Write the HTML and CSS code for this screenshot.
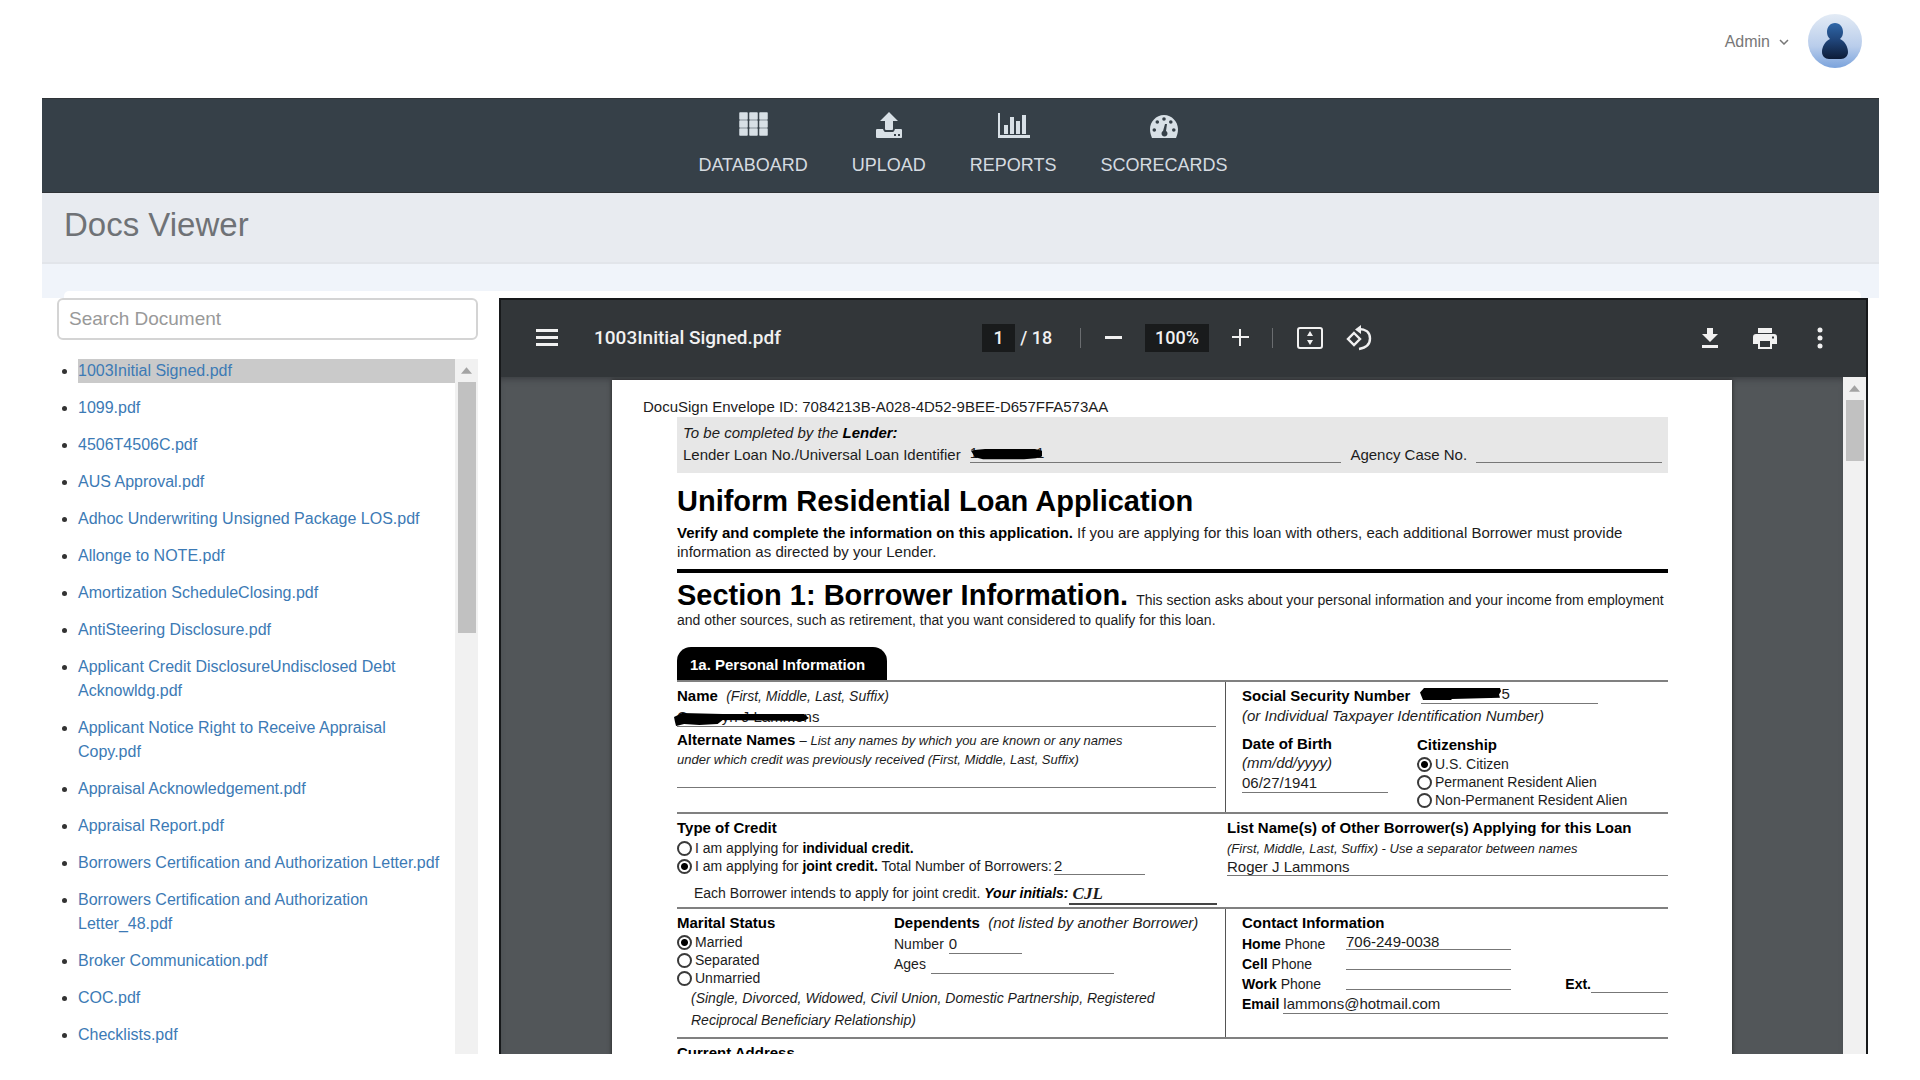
FILE: index.html
```html
<!DOCTYPE html>
<html lang="en">
<head>
<meta charset="utf-8">
<title>Docs Viewer</title>
<link rel="stylesheet" href="styles.css">
</head>
<body>
<div class="shell">
  <header class="header">
    <button class="account" type="button">Admin
      <svg class="chevron" viewBox="0 0 10 6"><path d="M1 1l4 4 4-4" fill="none" stroke="#777" stroke-width="1.5"/></svg>
    </button>
    <svg class="avatar" viewBox="0 0 54 54" role="img" aria-label="Admin profile">
      <defs>
        <linearGradient id="disc" x1="0" y1="0" x2="0" y2="1"><stop offset="0" stop-color="#e3ebf5"/><stop offset=".6" stop-color="#b9cdeb"/><stop offset="1" stop-color="#7ba3dc"/></linearGradient>
        <linearGradient id="person" x1="0" y1="0" x2="0" y2="1"><stop offset="0" stop-color="#2f67a8"/><stop offset=".5" stop-color="#1f4377"/><stop offset="1" stop-color="#0d1c38"/></linearGradient>
      </defs>
      <circle cx="27" cy="27" r="27" fill="url(#disc)"/>
      <path fill="url(#person)" d="M27 9c5 0 8 4 8 9 0 3-1 5-3 7 5 2 8 8 8 13 0 4-3 7-7 7H21c-4 0-7-3-7-7 0-5 3-11 8-13-2-2-3-4-3-7 0-5 3-9 8-9z"/>
    </svg>
  </header>

  <nav class="nav">
    <a href="#databoard"><svg viewBox="0 0 32 28"><path d="M3 1h7v6H3zM13 1h7v6h-7zM23 1h7v6h-7zM3 9h7v6H3zM13 9h7v6h-7zM23 9h7v6h-7zM3 17h7v6H3zM13 17h7v6h-7zM23 17h7v6h-7z" stroke="#d8e0e6" stroke-width="1.500" stroke-linejoin="round"/></svg>DATABOARD</a>
    <a href="#upload"><svg viewBox="0 0 32 28"><path fill-rule="evenodd" d="M16 0l9 9h-5v8c0 1-1 1-1 1h-6c-1 0-1-1-1-1V9H7zM4 17h6c1 3 2 3 3 3h6c1 0 2 0 3-3h6c1 0 1 1 1 1v7c0 1-1 1-1 1H4c-1 0-1-1-1-1v-7c0-1 1-1 1-1zm17 5v2h2v-2zm4 0v2h2v-2z"/></svg>UPLOAD</a>
    <a href="#reports"><svg viewBox="0 0 32 28"><path d="M1 1h2v22h30v3H1zM7 13h4v9H7zM13 5h4v17h-4zM19 9h4v13h-4zM25 3h4v19h-4z"/></svg>REPORTS</a>
    <a href="#scorecards"><svg viewBox="0 0 32 28"><path fill-rule="evenodd" d="M16 3c8 0 14 7 14 14 0 4-1 6-2 9H4c-1-3-2-5-2-9C2 10 8 3 16 3zM14.200 7a1.800 1.800 0 1 0 3.600 0a1.800 1.800 0 1 0-3.600 0zM7.500 10a1.800 1.800 0 1 0 3.600 0a1.800 1.800 0 1 0-3.600 0zM21 10a1.800 1.800 0 1 0 3.600 0a1.800 1.800 0 1 0-3.600 0zM4.500 18a1.800 1.800 0 1 0 3.600 0a1.800 1.800 0 1 0-3.600 0zM24 18a1.800 1.800 0 1 0 3.600 0a1.800 1.800 0 1 0-3.600 0zM17 12l-2 7a3 3 0 1 0 3 0l1-7z"/></svg>SCORECARDS</a>
  </nav>

  <div class="titlebar"><h1>Docs Viewer</h1></div>
  <div class="strip"><div class="strip-edge"></div></div>

  <main class="workspace">
    <aside class="sidebar">
      <input class="search" type="search" placeholder="Search Document" aria-label="Search Document">
      <div class="list-box">
        <ul class="docs">
          <li><a class="current" href="#d1">1003Initial Signed.pdf</a></li>
          <li><a href="#d2">1099.pdf</a></li>
          <li><a href="#d3">4506T4506C.pdf</a></li>
          <li><a href="#d4">AUS Approval.pdf</a></li>
          <li><a href="#d5">Adhoc Underwriting Unsigned Package LOS.pdf</a></li>
          <li><a href="#d6">Allonge to NOTE.pdf</a></li>
          <li><a href="#d7">Amortization ScheduleClosing.pdf</a></li>
          <li><a href="#d8">AntiSteering Disclosure.pdf</a></li>
          <li><a href="#d9">Applicant Credit DisclosureUndisclosed Debt Acknowldg.pdf</a></li>
          <li><a href="#d10">Applicant Notice Right to Receive Appraisal Copy.pdf</a></li>
          <li><a href="#d11">Appraisal Acknowledgement.pdf</a></li>
          <li><a href="#d12">Appraisal Report.pdf</a></li>
          <li><a href="#d13">Borrowers Certification and Authorization Letter.pdf</a></li>
          <li><a href="#d14">Borrowers Certification and Authorization Letter_48.pdf</a></li>
          <li><a href="#d15">Broker Communication.pdf</a></li>
          <li><a href="#d16">COC.pdf</a></li>
          <li><a href="#d17">Checklists.pdf</a></li>
        </ul>
        <div class="track"><svg viewBox="0 0 12 7"><path d="M6 0l6 7H0z" fill="#a3a3a3"/></svg><div class="thumb thumb-list"></div></div>
      </div>
    </aside>

    <section class="viewer">
      <div class="toolbar">
        <div class="tools">
          <button type="button" aria-label="Menu"><svg class="icon" viewBox="0 0 24 24"><path d="M1 3h22v3H1zM1 10h22v3H1zM1 17h22v3H1z"/></svg></button>
          <span class="filename">1003Initial Signed.pdf</span>
        </div>
        <div class="tools tools-mid">
          <input class="field page-no" type="text" value="1" aria-label="Page number">
          <span class="total">/ 18</span>
          <span class="sep"></span>
          <button type="button" aria-label="Zoom out"><svg class="icon-sm" viewBox="0 0 17 17"><path d="M0 7h17v3H0z"/></svg></button>
          <input class="field zoom" type="text" value="100%" aria-label="Zoom level">
          <button type="button" aria-label="Zoom in"><svg class="icon-sm" viewBox="0 0 17 17"><path d="M7 0h2v7h8v2H9v8H7V9H0V7h7z"/></svg></button>
          <span class="sep"></span>
          <button type="button" aria-label="Fit to page"><svg class="icon-lg" viewBox="0 0 26 26"><path d="M3 3h20q2 0 2 2v16q0 2-2 2H3q-2 0-2-2V5q0-2 2-2z" fill="none" stroke="#f1f1f1" stroke-width="2"/><path d="M13 6l3 5h-6zM13 20l3-5h-6z"/></svg></button>
          <button type="button" aria-label="Rotate"><svg class="icon-lg" viewBox="0 0 26 26"><path d="M8 8l6 6-6 6-6-6zM13 4c6 0 11 3 11 9.500S19 23 13 24" fill="none" stroke="#f1f1f1" stroke-width="2.400"/><path d="M15 0v9l-6-4.500z"/></svg></button>
        </div>
        <div class="tools tools-end">
          <button type="button" aria-label="Download"><svg class="icon" viewBox="0 0 24 24"><path d="M9 2h6v6h5l-8 8-8-8h5zM4 19h16v3H4z"/></svg></button>
          <button type="button" aria-label="Print"><svg class="icon" viewBox="0 0 24 24"><path fill-rule="evenodd" d="M5 2h14v5H5zM3 8h18q3 0 3 3v7h-5v5H5v-5H0v-7q0-3 3-3zm4 7v6h10v-6zM19 10.500v2h2v-2z"/></svg></button>
          <button type="button" aria-label="More"><svg class="icon" viewBox="0 0 24 24"><circle cx="12" cy="4" r="2.500"/><circle cx="12" cy="12" r="2.500"/><circle cx="12" cy="20" r="2.500"/></svg></button>
        </div>
      </div>

      <div class="canvas">
        <div class="desk">
          <article class="page">
            <p class="envelope">DocuSign Envelope ID: 7084213B-A028-4D52-9BEE-D657FFA573AA</p>
            <div class="form">
              <div class="lender">
                <p><i>To be completed by the <b>Lender:</b></i></p>
                <div class="line-row">
                  <span>Lender Loan No./Universal Loan Identifier</span>
                  <span class="blank blank-wide"><span class="redacted">1<span class="covered-loan"></span>1<svg class="ink ink-loan" viewBox="0 0 72 14" preserveAspectRatio="none"><path d="M0 3l6-1 8-1h50l7 2v6l-6 2-12 1H12L4 10z"/></svg></span></span>
                  <span>Agency Case No.</span>
                  <span class="blank blank-case"></span>
                </div>
              </div>

              <h2 class="form-title">Uniform Residential Loan Application</h2>
              <p class="verify"><b>Verify and complete the information on this application.</b> If you are applying for this loan with others, each additional Borrower must provide information as directed by your Lender.</p>

              <div class="section-head"><h2>Section 1: Borrower Information.</h2><span>This section asks about your personal information and your income from employment</span></div>
              <p class="section-note">and other sources, such as retirement, that you want considered to qualify for this loan.</p>

              <h3 class="tab">1a. Personal Information</h3>

              <div class="band band-a">
                <div class="left">
                  <p class="lh22"><b>Name</b>&nbsp; <i class="mid">(First, Middle, Last, Suffix)</i></p>
                  <div class="value name-value"><span class="redacted">C<span class="covered"></span>yn J Lammons<svg class="ink ink-name" viewBox="0 0 136 16" preserveAspectRatio="none"><path d="M0 6l8-4 40 1 80 0 5 4-5 3-80-1-5 4-18 1-15-1-8 2-1-4z"/></svg></span></div>
                  <p class="alt"><b>Alternate Names</b> <i class="small">– List any names by which you are known or any names</i></p>
                  <p class="lh18"><i class="small">under which credit was previously received (First, Middle, Last, Suffix)</i></p>
                  <div class="blank-line"></div>
                </div>
                <div class="right">
                  <div class="line-row"><b>Social Security Number</b><span class="blank blank-ssn"><span class="redacted"><span class="covered-ssn"></span>5<svg class="ink ink-ssn" viewBox="0 0 82 12" preserveAspectRatio="none"><path d="M0 5l4-4 76 0 1 3-2 3 1 3-48 1-1 1-28 0z"/></svg></span></span></div>
                  <p class="lh18"><i>(or Individual Taxpayer Identification Number)</i></p>
                  <div class="birth">
                    <div class="dob">
                      <p class="lh18"><b>Date of Birth</b></p>
                      <p class="lh19"><i>(mm/dd/yyyy)</i></p>
                      <div class="value dob-value">06/27/1941</div>
                    </div>
                    <fieldset class="citizen">
                      <legend><b>Citizenship</b></legend>
                      <label class="radio"><input type="radio" name="cit" checked>U.S. Citizen</label>
                      <label class="radio"><input type="radio" name="cit">Permanent Resident Alien</label>
                      <label class="radio"><input type="radio" name="cit">Non-Permanent Resident Alien</label>
                    </fieldset>
                  </div>
                </div>
              </div>

              <div class="band band-b">
                <div class="left">
                  <p class="lh22"><b>Type of Credit</b></p>
                  <label class="radio"><input type="radio" name="credit"><span>I am applying for <b>individual credit.</b></span></label>
                  <div class="joint"><label class="radio"><input type="radio" name="credit" checked><span>I am applying for <b>joint credit.</b> Total Number of Borrowers:</span></label><span class="value total-value">2</span></div>
                  <div class="initials"><span>Each Borrower intends to apply for joint credit. <b><i>Your initials:</i></b></span><span class="signature">CJL</span></div>
                </div>
                <div class="right">
                  <p class="lh22"><b>List Name(s) of Other Borrower(s) Applying for this Loan</b></p>
                  <p class="lh18"><i class="small">(First, Middle, Last, Suffix) - Use a separator between names</i></p>
                  <div class="value other-value">Roger J Lammons</div>
                </div>
              </div>

              <div class="band band-c">
                <div class="left">
                  <div class="status-row">
                    <fieldset class="marital">
                      <legend><b>Marital Status</b></legend>
                      <label class="radio"><input type="radio" name="marital" checked>Married</label>
                      <label class="radio"><input type="radio" name="marital">Separated</label>
                      <label class="radio"><input type="radio" name="marital">Unmarried</label>
                    </fieldset>
                    <div class="dependents">
                      <p class="lh22"><b>Dependents</b>&nbsp; <i>(not listed by another Borrower)</i></p>
                      <div class="dep-row"><span>Number</span><span class="value number-value">0</span></div>
                      <div class="dep-row"><span>Ages</span><span class="value ages-value"></span></div>
                    </div>
                  </div>
                  <p class="partner"><i>(Single, Divorced, Widowed, Civil Union, Domestic Partnership, Registered<br>Reciprocal Beneficiary Relationship)</i></p>
                </div>
                <div class="right">
                  <p class="lh22"><b>Contact Information</b></p>
                  <div class="contact"><span><b>Home</b> Phone</span><span class="value phone">706-249-0038</span></div>
                  <div class="contact"><span><b>Cell</b> Phone</span><span class="value phone"></span></div>
                  <div class="contact"><span><b>Work</b> Phone</span><span class="value phone"></span><b class="ext">Ext.</b><span class="value ext-value"></span></div>
                  <div class="email"><b>Email</b><span class="value email-value">lammons@hotmail.com</span></div>
                </div>
              </div>

              <div class="band band-d"><p class="lh22"><b>Current Address</b></p></div>
            </div>
          </article>
        </div>
        <div class="track"><svg viewBox="0 0 12 7"><path d="M6 0l6 7H0z" fill="#a3a3a3"/></svg><div class="thumb thumb-page"></div></div>
      </div>
    </section>
  </main>
</div>
</body>
</html>
```
FILE: styles.css
```css
* { box-sizing: border-box; }
body, h1, h2, h3, p, ul, fieldset { margin: 0; padding: 0; }
body { background: #fff; font-family: "Liberation Sans", Arial, sans-serif; overflow: hidden; }
button { border: 0; padding: 0; background: none; font: inherit; color: inherit; cursor: pointer; }
fieldset { border: 0; min-width: 0; }
legend { padding: 0; }
a { text-decoration: none; }

.shell { display: flex; flex-direction: column; height: 100vh; padding: 0 41px 26px 42px; }

/* header */
.header { display: flex; justify-content: flex-end; flex: none; height: 98px; padding: 14px 17px 0 0; gap: 19px; }
.account { display: flex; align-items: center; gap: 9px; height: 55px; font-size: 16px; color: #777; }
.chevron { width: 10px; height: 6px; }
.avatar { width: 54px; height: 54px; }

.nav { display: flex; justify-content: center; gap: 44px; flex: none; height: 95px; padding: 13px 0 0 5px; background: #364048; border-top: 1px solid #2f3337; border-bottom: 1px solid #2f3337; }
.nav a { display: flex; flex-direction: column; align-items: center; gap: 13px; font-size: 18px; line-height: 24px; color: #d5dbe0; }
.nav svg { width: 32px; height: 28px; fill: #d8e0e6; overflow: visible; }

.titlebar { flex: none; height: 71px; padding: 1px 22px; background: #e8ebf0; border-bottom: 2px solid #e2e5ea; }
.titlebar h1 { font-size: 33px; font-weight: 400; line-height: 62px; color: #6f7276; }
.strip { flex: none; height: 34px; padding: 27px 18px 0 22px; background: #f0f4fa; }
.strip-edge { height: 7px; background: #fff; border-radius: 5px 5px 0 0; }

.workspace { display: grid; grid-template-columns: 421fr 1369fr; gap: 21px; flex: 1; min-height: 0; padding: 0 11px 0 15px; }

/* document list */
.sidebar { display: flex; flex-direction: column; min-height: 0; min-width: 0; }
.search { flex: none; height: 42px; padding: 0 10px; border: 2px solid #d4d4d4; border-radius: 6px; outline: 0; appearance: none; font: 19px "Liberation Sans", Arial, sans-serif; color: #555; }
.search::placeholder { color: #999; opacity: 1; }
.list-box { display: flex; flex: 1; min-height: 0; margin-top: 19px; overflow: hidden; }
.docs { display: flex; flex-direction: column; flex: 1; gap: 13px; padding-left: 21px; font-size: 16px; line-height: 24px; color: #333; }
.docs a { display: block; padding-right: 8px; color: #3c7ab5; }
.docs .current { background: #cacaca; }
.track { display: flex; flex-direction: column; align-items: center; flex: none; width: 23px; padding-top: 8px; background: #f1f1f1; }
.track svg { width: 11px; height: 7px; }
.thumb { width: 18px; margin-top: 8px; background: #c1c1c1; }
.thumb-list { height: 251px; }
.thumb-page { height: 61px; }

/* viewer */
.viewer { display: flex; flex-direction: column; min-width: 0; min-height: 0; border: 2px solid #17191b; border-bottom: 0; overflow: hidden; }
.toolbar { display: grid; grid-template-columns: 447fr 390fr 460fr; align-items: center; flex: none; height: 77px; padding: 0 34px 2px; background: #323639; color: #f1f1f1; font: 500 18px Roboto, sans-serif; }
.toolbar svg { display: block; fill: #f1f1f1; }
.icon { width: 24px; height: 24px; }
.icon-sm { width: 17px; height: 17px; }
.icon-lg { width: 26px; height: 26px; }
.tools { display: flex; align-items: center; }
.filename { margin-left: 35px; font-size: 19px; }
.tools-mid { justify-content: space-between; }
.tools-end { justify-content: flex-end; gap: 31px; }
.field { height: 28px; padding: 0; border: 0; background: #191b1c; color: #f1f1f1; font: 500 18px Roboto, sans-serif; text-align: center; }
.page-no { width: 33px; }
.zoom { width: 64px; }
.total { margin: 0 5px 0 -18px; }
.sep { width: 1px; height: 20px; background: #6a6d70; }
.canvas { display: flex; flex: 1; min-height: 0; }
.desk { display: flex; flex: 1; min-width: 0; padding: 3px 111px 0; background: #525659; overflow: hidden; box-shadow: inset 0 5px 6px -3px #3a3d40; }

/* loan application page */
.page { flex: 1; min-width: 0; height: max-content; padding: 17px 64px 40px 31px; background: #fff; color: #1c1c1c; font-size: 15px; white-space: nowrap; box-shadow: 0 0 4px #222; }
.page b, .page h2 { color: #000; }
.envelope { line-height: 20px; }
.form { margin-left: 34px; }
.lh22 { line-height: 22px; }
.lh19 { line-height: 19px; }
.lh18 { line-height: 18px; }
.mid { font-size: 14px; }
.small { font-size: 13px; }
.lender { padding: 5px 6px 7px; background: #e7e7e7; line-height: 22px; }
.line-row { display: flex; align-items: flex-end; gap: 9px; line-height: 22px; }
.blank { height: 19px; margin-bottom: 3px; border-bottom: 1px solid #777; line-height: 18px; }
.blank-wide { flex: 2; }
.blank-case { flex: 1; }
.form-title { margin-top: 10px; font-size: 29px; line-height: 36px; }
.verify { margin-top: 4px; padding-bottom: 8px; border-bottom: 4px solid #000; line-height: 19px; white-space: normal; }
.section-head { display: flex; align-items: baseline; gap: 8px; height: 32px; margin-top: 6px; font-size: 14px; }
.section-head h2 { font-size: 29px; line-height: 32px; }
.section-note { font-size: 14px; line-height: 18px; }
.tab { width: 210px; margin-top: 18px; padding: 2px 13px 0; border-radius: 14px 14px 0 0; background: #000; color: #fff; font-size: 15px; line-height: 31px; }

.redacted { position: relative; display: inline-block; }
.covered { display: inline-block; width: 34px; }
.covered-loan { display: inline-block; width: 58px; }
.covered-ssn { display: inline-block; width: 80px; }
.ink { position: absolute; fill: #000; }
.ink-loan { left: 1px; top: 4px; width: 72px; height: 13px; }
.ink-name { left: -3px; top: 3px; width: 138px; height: 16px; }
.ink-ssn { left: -1px; top: 2px; width: 82px; height: 13px; }

.band { display: grid; grid-template-columns: 549fr 442fr; border-top: 2px solid #808080; }
.band .left, .band .right { min-width: 0; }
.band .left { padding-right: 9px; }
.value { border-bottom: 1px solid #777; }
.band-a { height: 132px; }
.band-a .left, .band-c .left { border-right: 1px solid #555; }
.band-a .left, .band-a .right, .band-c .left, .band-c .right { padding-top: 3px; }
.band-a .right, .band-c .right { padding-left: 16px; }
.name-value { height: 20px; padding-top: 1px; line-height: 18px; }
.alt { margin-top: 4px; line-height: 18px; }
.blank-line { height: 19px; border-bottom: 1px solid #777; }
.band-a .line-row { gap: 11px; }
.blank-ssn { width: 177px; }
.birth { display: flex; gap: 29px; margin-top: 10px; }
.dob { width: 146px; }
.dob-value { margin-top: 2px; line-height: 18px; }
.citizen legend { line-height: 20px; }
.radio { display: flex; align-items: center; gap: 3px; font-size: 14px; line-height: 18px; }
.radio input { flex: none; width: 15px; height: 15px; margin: 0; border: 2px solid #3a3a3a; border-radius: 50%; appearance: none; }
.radio input:checked { background: radial-gradient(circle, #000 0 3px, #fff 4px); }

.band-b { height: 95px; }
.band-b .left, .band-b .right { padding-top: 3px; }
.joint { display: flex; gap: 2px; }
.total-value { width: 91px; line-height: 17px; }
.initials { display: flex; margin-top: 8px; padding-left: 17px; font-size: 14px; line-height: 20px; }
.signature { flex: 1; height: 22px; padding-left: 4px; border-bottom: 2px solid #444; font: italic bold 17px "Liberation Serif", serif; line-height: 22px; }
.band-b .right { padding-left: 1px; }
.other-value { line-height: 17px; }

.band-c { height: 130px; }
.status-row { display: flex; }
.marital { width: 217px; }
.marital legend { line-height: 21px; }
.dep-row { display: flex; gap: 5px; font-size: 14px; line-height: 20px; }
.dep-row .value { height: 20px; font-size: 15px; }
.number-value { width: 73px; }
.ages-value { width: 183px; }
.partner { padding-left: 14px; font-size: 14px; line-height: 22px; }
.contact { display: grid; grid-template-columns: 104px 165px 1fr 77px; height: 20px; font-size: 14px; line-height: 20px; }
.contact .value { font-size: 15px; }
.phone { height: 16px; line-height: 15px; }
.contact .ext { text-align: right; }
.ext-value { height: 19px; }
.email { display: flex; gap: 4px; font-size: 14px; line-height: 20px; }
.email-value { flex: 1; height: 20px; font-size: 15px; }
.band-d { padding-top: 3px; }
```
